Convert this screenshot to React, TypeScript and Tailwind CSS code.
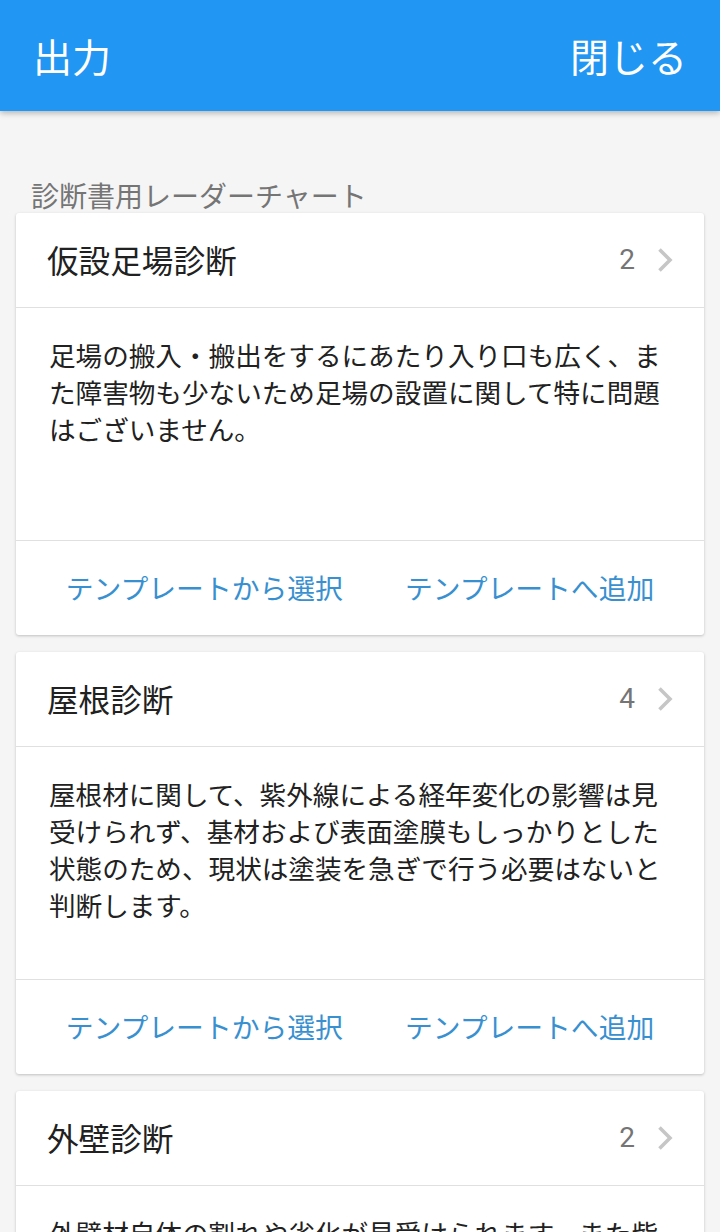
const font = { fontFamily: '"Noto Sans CJK JP", "Noto Sans", sans-serif' };

type Diagnosis = {
  title: string;
  count: number;
  lines: string[];
};

const ITEMS: Diagnosis[] = [
  {
    title: "仮設足場診断",
    count: 2,
    lines: [
      "足場の搬入・搬出をするにあたり入り口も広く、ま",
      "た障害物も少ないため足場の設置に関して特に問題",
      "はございません。",
    ],
  },
  {
    title: "屋根診断",
    count: 4,
    lines: [
      "屋根材に関して、紫外線による経年変化の影響は見",
      "受けられず、基材および表面塗膜もしっかりとした",
      "状態のため、現状は塗装を急ぎで行う必要はないと",
      "判断します。",
    ],
  },
  {
    title: "外壁診断",
    count: 2,
    lines: [
      "外壁材自体の割れや劣化が見受けられます。また紫",
      "外線による色あせも目立つため、塗装による保護を",
      "おすすめします。",
    ],
  },
];

function Chevron() {
  return (
    <svg width="16" height="26" viewBox="0 0 16 26" fill="none">
      <path d="M2.5 2.5 L13 13 L2.5 23.5" stroke="#c6c6c6" strokeWidth="3.6" />
    </svg>
  );
}

function DiagnosisCard({ item }: { item: Diagnosis }) {
  return (
    <div className="bg-white rounded-[3px] shadow-[0_1px_3px_rgba(0,0,0,0.22)] overflow-hidden">
      {/* Title row */}
      <div className="h-[95px] flex items-center justify-between pl-[31px] pr-[31px] border-b border-[#e0e0e0]">
        <div className="text-[31.6px] text-[#212121]">{item.title}</div>
        <div className="flex items-center gap-[22px]">
          <span
            className="text-[28px] text-[#757575]"
            style={{ fontFamily: 'Roboto, "Noto Sans", sans-serif' }}
          >
            {item.count}
          </span>
          <Chevron />
        </div>
      </div>

      {/* Body */}
      <div className="h-[233px] pl-[33px] pt-[28px] border-b border-[#e0e0e0] text-[26.6px] leading-[37px] text-[#212121]">
        {item.lines.map((l, i) => (
          <div key={i} className="whitespace-nowrap">
            {l}
          </div>
        ))}
      </div>

      {/* Actions */}
      <div className="h-[94px] flex items-center justify-center gap-[62px] text-[27.8px] text-[#3990d0]">
        <span>テンプレートから選択</span>
        <span>テンプレートへ追加</span>
      </div>
    </div>
  );
}

export default function App() {
  return (
    <div className="w-[720px] h-[1232px] overflow-hidden bg-[#f5f5f5]" style={font}>
      {/* Header */}
      <div className="relative z-10 h-[111px] bg-[#2196f3] flex items-center justify-between px-[33px] shadow-[0_2px_6px_rgba(0,0,0,0.28)]">
        <span className="text-[39px] text-white">出力</span>
        <span className="text-[39px] text-white">閉じる</span>
      </div>

      <div className="px-[16px]">
        <div className="pt-[68px] pb-[2px] pl-[15px] text-[28px] leading-[32px] text-[#757575]">
          診断書用レーダーチャート
        </div>
        <div className="flex flex-col gap-[17px]">
          {ITEMS.map((item) => (
            <DiagnosisCard key={item.title} item={item} />
          ))}
        </div>
      </div>
    </div>
  );
}
